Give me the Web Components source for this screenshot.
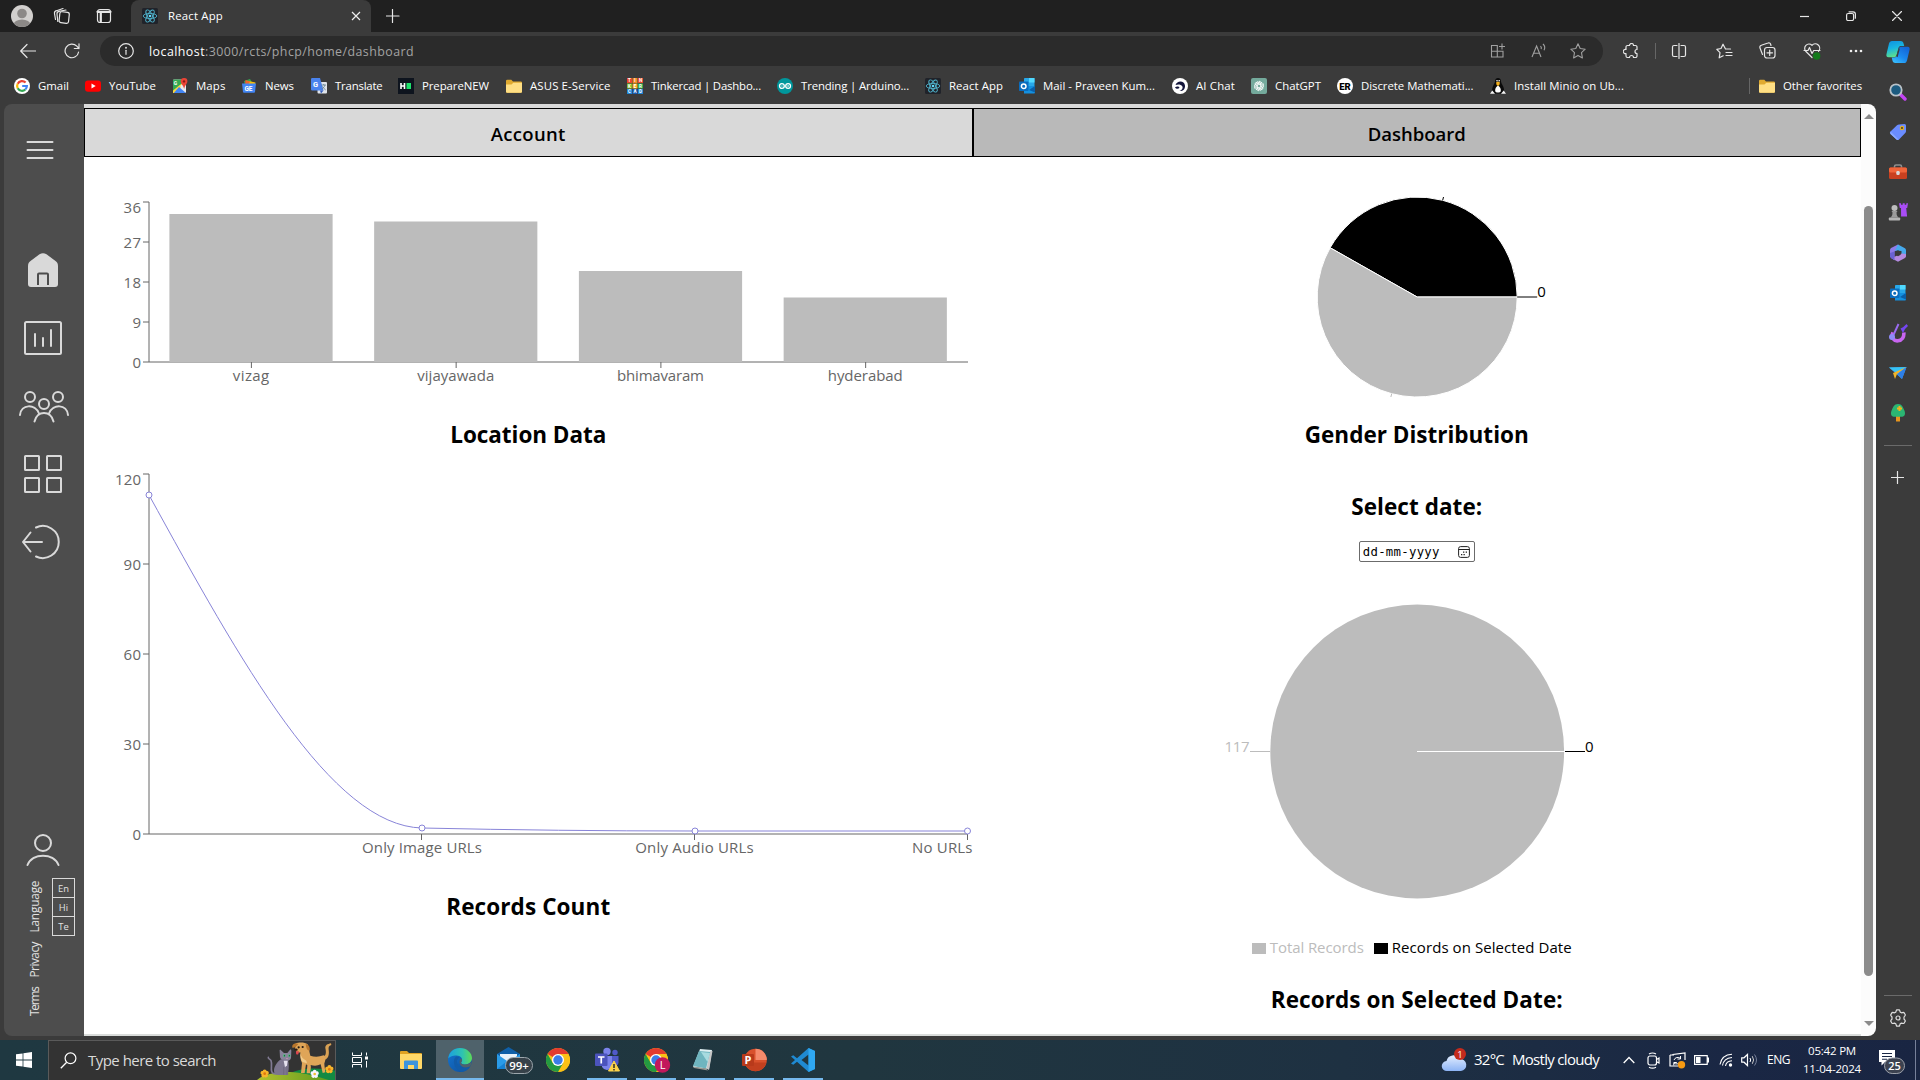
<!DOCTYPE html>
<html lang="en">
<head>
<meta charset="utf-8">
<title>React App</title>
<style>
html,body{margin:0;padding:0;width:1920px;height:1080px;overflow:hidden;background:#3b3b3b;font-family:"Open Sans","Noto Sans",sans-serif}
</style>
</head>
<body>
<desktop-screen></desktop-screen>
<script>
/* ---------- base ---------- */
const RESET = `*{box-sizing:border-box}svg{display:block;flex:none}`;
function define(name, css, html) {
  customElements.define(name, class extends HTMLElement {
    constructor() {
      super();
      const r = this.attachShadow({ mode: 'open' });
      const t = document.createElement('template');
      t.innerHTML = `<style>${RESET}${css}</style>${typeof html === 'function' ? html() : html}`;
      r.appendChild(t.content.cloneNode(true));
    }
  });
}
/* label whose tracking is set so that it fills a given width */
customElements.define('fit-text', class extends HTMLElement {
  constructor() {
    super();
    this.attachShadow({ mode: 'open' }).innerHTML =
      `<style>:host{display:inline-block;white-space:nowrap;flex:none}span{display:inline-block;white-space:pre}</style><span><slot></slot></span>`;
  }
  connectedCallback() { this.fit(); }
  fit() {
    const w = +this.getAttribute('w'), s = this.shadowRoot.querySelector('span');
    this.style.width = w + 'px';
    s.style.letterSpacing = '0';
    const n = s.getBoundingClientRect().width;
    if (n) s.style.letterSpacing = ((w - n) / this.textContent.length).toFixed(3) + 'px';
  }
});
/* lays items [x, width, markup] in a flex row, turning their starts into gaps */
function row(items, start) {
  let at = start;
  return items.map(([x, w, m]) => {
    const gap = x - at; at = x + w;
    return `<span class="c" style="width:${w}px;margin-left:${gap}px">${m}</span>`;
  }).join('');
}
const CELL = `.c{display:flex;align-items:center;justify-content:center;flex:none;height:100%}`;
const T = (w, s) => `<fit-text w="${w}">${s}</fit-text>`;
const S = (w, h, body, extra = '') => `<svg width="${w}" height="${h}" viewBox="0 0 ${w} ${h}" fill="none" ${extra}>${body}</svg>`;
const L = (w, body) => S(w, w, body, 'stroke="#e6e6e6" stroke-width="1.2" stroke-linecap="round" stroke-linejoin="round"');

/* ---------- icons ---------- */
const ic = {
  react: S(16,16,`<rect width="16" height="16" rx="1.5" fill="#20232a"/><g stroke="#4fb3cc" stroke-width=".9"><ellipse cx="8" cy="8" rx="6.8" ry="2.6"/><ellipse cx="8" cy="8" rx="6.8" ry="2.6" transform="rotate(60 8 8)"/><ellipse cx="8" cy="8" rx="6.8" ry="2.6" transform="rotate(120 8 8)"/></g><circle cx="8" cy="8" r="1.3" fill="#61dafb"/>`),
  google: S(16,16,`<circle cx="8" cy="8" r="8" fill="#fff"/><g stroke-width="2.2"><path d="M11.6 4.6A4.9 4.9 0 0 0 3.7 5.7" stroke="#ea4335"/><path d="M3.7 5.7a4.9 4.9 0 0 0 0 4.6" stroke="#fbbc05"/><path d="M3.7 10.3a4.9 4.9 0 0 0 7.6 1.2" stroke="#34a853"/><path d="M11.3 11.5A4.9 4.9 0 0 0 12.9 8H8.2" stroke="#4285f4"/></g>`),
  youtube: S(16,16,`<rect y="2.4" width="16" height="11.4" rx="3" fill="#f00"/><path d="M6.500 5.600v5l4.200-2.500z" fill="#fff"/>`),
  maps: S(16,16,`<rect x="1" y="1.500" width="13" height="13.500" rx="1" fill="#e8eaed"/><path d="M1 15 13.500 2.200 9 1.500H2a1 1 0 0 0-1 1z" fill="#34a853"/><path d="M1 12.500V15h2l11-11V2z" fill="#fbd63e"/><path d="m7 9 7 6H1.800z" fill="#4285f4"/><path d="m8 8 6 5.500V3z" fill="#e8eaed"/><text x="1.800" y="6.500" font-size="5" font-weight="700" fill="#fff" font-family="Roboto">G</text><path d="M12 0a3.300 3.300 0 0 1 3.400 3.400c0 2.200-2.600 3.600-3.200 7.600-.8-4-3.500-5.400-3.500-7.600A3.300 3.300 0 0 1 12 0z" fill="#ea4335"/><circle cx="12" cy="3.400" r="1.200" fill="#8c1a11"/>`),
  news: S(16,16,`<path d="m3 3 6-2 3 5-8 3z" fill="#34a853"/><path d="m5 2.500 9.500 2-1.500 6H4z" fill="#fbbc05"/><path d="m4 2 5 1.200-1 2.500-4 1z" fill="#ea4335" opacity=".7"/><path d="M1 5.500h14l-1 8.500a1 1 0 0 1-1 .8H3a1 1 0 0 1-1-.8z" fill="#4285f4"/><text x="3.400" y="12.600" font-size="6.500" font-weight="700" fill="#fff" font-family="Roboto">GE</text>`),
  translate: S(16,16,`<rect x="6.500" y="4" width="9.500" height="11.500" rx="1" fill="#dfe3ea"/><path d="M1.200 0H9l3.500 12.500H1.200A1.200 1.200 0 0 1 0 11.300V1.200A1.200 1.200 0 0 1 1.200 0z" fill="#4a83ee"/><text x="2" y="9" font-size="7.500" font-weight="700" fill="#fff" font-family="Roboto">G</text><path d="m9 12.500 3.500 0-2.500 3z" fill="#3159b8"/><path d="M10.500 7h4.500M12.700 6v1M14 7c-.5 2-2 3.400-3.300 4M11.500 8.500c.8 1.500 2 2.500 3.200 3.500" stroke="#607d8b" stroke-width=".8"/>`),
  hr: S(16,16,`<rect width="16" height="16" fill="#0e141e"/><path d="M3 5v6M6.500 5v6M3 8h4" stroke="#fff" stroke-width="1.600"/><rect x="8.500" y="5" width="4.500" height="6" fill="#1ee26b"/>`),
  folder: S(16,16,`<path d="M0 3a1.300 1.300 0 0 1 1.300-1.300h4L7 3.500h7.700A1.300 1.300 0 0 1 16 4.800v8.700a1.200 1.200 0 0 1-1.200 1.200H1.200A1.200 1.200 0 0 1 0 13.500z" fill="#e0aa30"/><path d="M0 6.500h5.500L7.300 4.800h8.700v8.700a1.200 1.200 0 0 1-1.200 1.200H1.200A1.200 1.200 0 0 1 0 13.500z" fill="#ffdf84"/>`),
  tinkercad: S(16,16,`<g><rect width="5" height="5" fill="#e9452c"/><rect x="5.500" width="5" height="5" fill="#f28a23"/><rect x="11" width="5" height="5" fill="#e9452c"/><rect y="5.500" width="5" height="5" fill="#83bb26"/><rect x="5.500" y="5.500" width="5" height="5" fill="#f9b31c"/><rect x="11" y="5.500" width="5" height="5" fill="#2fae4d"/><rect y="11" width="5" height="5" fill="#1f86d6"/><rect x="5.500" y="11" width="5" height="5" fill="#1a5fb4"/><rect x="11" y="11" width="5" height="5" fill="#1f86d6"/></g><g font-size="4.600" font-weight="700" fill="#fff" font-family="Roboto" text-anchor="middle"><text x="2.500" y="4.200">T</text><text x="8" y="4.200">I</text><text x="13.500" y="4.200">N</text><text x="2.500" y="9.700">K</text><text x="8" y="9.700">E</text><text x="13.500" y="9.700">R</text><text x="2.500" y="15.200">C</text><text x="8" y="15.200">A</text><text x="13.500" y="15.200">D</text></g>`),
  arduino: S(16,16,`<circle cx="8" cy="8" r="8" fill="#00979c"/><g stroke="#fff" stroke-width="1.300"><circle cx="4.900" cy="8" r="2.400"/><circle cx="11.100" cy="8" r="2.400"/></g><path d="M4 8h1.800M10.200 8H12M11.100 7.100v1.800" stroke="#fff" stroke-width=".6"/>`),
  outlook: S(16,16,`<rect x="5" width="10.500" height="9" rx=".8" fill="#28a8ea"/><rect x="10" y="0" width="5.500" height="4.500" fill="#50d9ff"/><path d="M5 8h11v6.500a1 1 0 0 1-1 1H5z" fill="#1490df"/><path d="m10 12 6-4v6.500z" fill="#0a5fa8"/><rect y="3.500" width="9.500" height="9.500" rx=".8" fill="#0a6cbd"/><circle cx="4.700" cy="8.200" r="2.300" stroke="#fff" stroke-width="1.500"/>`),
  aichat: S(16,16,`<circle cx="8" cy="8" r="8" fill="#fff"/><path d="M3.500 7C5 2.200 12.500 2.200 13 7.700c.2 3.600-2.500 5.800-5.500 5.300 2.500-.8 3.800-3 2.800-4.800C9 6.200 6 6 3.500 7z" fill="#12143a"/><path d="M3 9.200c2-1.200 4-.8 4.500.5-1 1.500-3.500 1.500-4.500-.5z" fill="#12143a"/>`),
  gpt: S(16,16,`<rect width="16" height="16" rx="2" fill="#74aa9c"/><g stroke="#fff" stroke-width=".9">${[0,60,120,180,240,300].map(a => `<path d="M8 3.100 11 4.800v3.600L8 10" transform="rotate(${a} 8 8)"/>`).join('')}</g>`),
  er: S(16,16,`<circle cx="8" cy="8" r="8" fill="#fff"/><text x="8" y="11.500" font-size="9.500" font-weight="900" fill="#000" font-family="Roboto" text-anchor="middle">ER</text>`),
  tux: S(16,16,`<path d="M8 0c2 0 3 1.500 3 3.500 0 2 2.500 4 3 7.500.2 2-.5 4-1.500 4.500h-9C2.500 15 2 13 2.200 11 2.500 7.500 5 5.500 5 3.500 5 1.500 6 0 8 0z" fill="#0b0b0b"/><path d="M8 7.500c2.300 1.500 3 3.500 2.800 5.500-.2 2-5.400 2-5.600 0C5 11 5.700 9 8 7.500z" fill="#fff"/><path d="m6 4.500 2-1 2 1-.6 2.400L8 8.100 6.600 6.900z" fill="#f2b01e"/><circle cx="7" cy="2.700" r=".8" fill="#fff"/><circle cx="9.200" cy="2.700" r=".8" fill="#fff"/><path d="M0 15.800 2.300 12.500l2.700 3.300zM16 15.800l-2.300-3.300-2.700 3.300z" fill="#f5f5f5"/>`),
  copilot: S(24,24,`<defs><linearGradient id="a" x1="0" y1="0" x2=".3" y2="1"><stop stop-color="#0f8fe0"/><stop offset=".5" stop-color="#18b5e0"/><stop offset="1" stop-color="#5fe08a"/></linearGradient><linearGradient id="b" x1=".7" y1="0" x2="0" y2="1"><stop stop-color="#1467d8"/><stop offset=".5" stop-color="#1b8af0"/><stop offset="1" stop-color="#3ec8ff"/></linearGradient></defs><path d="M6 1h8.500c2 0 2.800 1.200 3.200 3l.5 2H15c-1.500 0-2.200.8-2.600 2.200L10.600 15c-.5 1.600-1.200 2.300-2.800 2.300H2.500C.6 17.300 0 15.800.5 14L3 3.600C3.400 2 4.500 1 6 1z" fill="url(#a)"/><path d="M18 23H9.500c-2 0-2.800-1.200-3.200-3l-.6-2.600h2.500c1.500 0 2.200-.7 2.700-2.200L12.700 9c.5-1.600 1.200-2.300 2.800-2.300h6c1.900 0 2.500 1.500 2 3.300L21 20.400c-.4 1.600-1.500 2.600-3 2.600z" fill="url(#b)"/><path d="M10.300 16.300 12.700 8.500h1.200l-2.300 8.800z" fill="#3b3b3b"/>`),
  chrome: S(24,24,`<circle cx="12" cy="12" r="12" fill="#fbc116"/><path d="M12 12 1.600 6A12 12 0 0 1 22.400 6z" fill="#e33b2e"/><path d="M12 6h10.400a12 12 0 0 1-10.400 18l5.200-9z" fill="#fbc116"/><path d="M1.600 6A12 12 0 0 0 12 24l5.200-9-10.400 0z" fill="#249a41"/><circle cx="12" cy="12" r="6" fill="#fff"/><circle cx="12" cy="12" r="4.700" fill="#3b7de8"/>`)
};

/* ---------- title bar ---------- */
define('title-bar', `:host{display:flex;height:32px;background:#202020;color:#fff;font-size:11.400px}${CELL}
.tab{display:flex;align-items:center;width:240px;height:32px;background:#3b3b3b;border-radius:8px 8px 0 0;padding-left:11px;flex:none}
.tab fit-text{margin:-1px 0 0 10px}.x{margin-left:128px}.r{display:flex;margin-left:auto}`,
`${row([
 [11,22,S(22,24,`<circle cx="11" cy="12" r="11" fill="#d2d0ce"/><clipPath id="k"><circle cx="11" cy="12" r="11"/></clipPath><g clip-path="url(#k)" fill="#8c8987"><circle cx="11" cy="9.500" r="4.800"/><ellipse cx="11" cy="21" rx="8.500" ry="5.500"/></g>`)],
 [53,18,L(18,`<rect x="6.500" y="5" width="9.500" height="11" rx="2"  transform="rotate(6 11 10)"/><path d="M4.800 14.500 4 7a2.500 2.500 0 0 1 2-2.700L13 3M2.500 12.500 1.500 6.500a2.500 2.500 0 0 1 2-2.800L10 1.500"/>`)],
 [96,16,L(16,`<rect x="1.500" y="1.500" width="13" height="13" rx="2.500"/><path d="M1.500 3.800h13M4.800 5v9" stroke-width="2.200"/>`)]
],0)}
<div class="tab" style="margin-left:19px">${ic.react}${T(55,'React App')}<svg class="x" width="10" height="10" viewBox="0 0 10 10" stroke="#eee" stroke-width="1.200"><path d="m1 1 8 8M9 1 1 9"/></svg></div>
${row([[386,14,L(14,`<path d="M6.500.5v13M0 7h13"/>`)]],371)}
<div class="r">${row([[1800,10,L(10,`<path d="M0 5.500h9" stroke-linecap="butt"/>`)],[1846,10,L(10,`<rect x=".6" y="2.500" width="7" height="7" rx="1.500"/><path d="M3 .8h4a2.400 2.400 0 0 1 2.400 2.400v4"/>`)],[1892,10,L(10,`<path d="m.5.5 9 9M9.500.5l-9 9"/>`)]],1800)}<span style="width:18px"></span></div>`);

/* ---------- tool bar ---------- */
define('tool-bar', `:host{display:flex;height:38px;padding-top:4px;align-items:flex-start;color:#fff;font-size:12.400px}${CELL}.c{height:30px}
.pill{display:flex;align-items:center;height:30px;width:1503px;margin-left:20px;border-radius:15px;background:#2b2b2b;flex:none}.pill .g{color:#a3a3a3}`,
`${row([
 [20,16,L(16,`<path d="M15.500 8H1M7 1.500.700 8 7 14.500"/>`)],
 [64,16,L(16,`<path d="M14.600 9A6.800 6.800 0 1 1 12.800 3.200L15 5.500M15 .8v4.700h-4.700"/>`)]
],0)}
<div class="pill">${row([
 [118,16,L(16,`<circle cx="8" cy="8" r="7.300"/><path d="M8 7.300v4"/><circle cx="8" cy="4.700" r=".4"/>`)],
 [149,56,T(56,'localhost')],[205,209,`<span class="g">${T(209,':3000/rcts/phcp/home/dashboard')}</span>`],
 [1490,16,S(16,16,`<path d="M1.500 2.500h5.800v5.700H1.500zM1.500 8.200h5.800v5.800H1.500zM7.300 8.200H13V14H7.300zM12 .5v6M9 3.500h6" stroke="#a0a0a0" stroke-width="1.100"/>`)],
 [1531,16,S(16,16,`<path d="m1 14 4.600-11L10 14M2.600 10.200h6.200M9.500 3.200c.9.900 1 2 .7 3M12 1c1.700 1.600 2 4.400 1 6.200" stroke="#a0a0a0" stroke-width="1.100"/>`)],
 [1570,16,S(16,16,`<path d="m8 .8 2.200 4.700 5 .7-3.700 3.500.9 5.200L8 12.400l-4.400 2.500.9-5.200L.8 6.200l5-.7z" stroke="#a0a0a0" stroke-width="1.100" stroke-linejoin="round"/>`)]
],100)}</div>
${row([
 [1623,16,L(16,`<path d="M3 5.500V4a1.500 1.500 0 0 1 1.500-1.500h2a2 2 0 0 1 4 0h2A1.500 1.500 0 0 1 14 4v2.500a2 2 0 0 0 0 4V13a1.500 1.500 0 0 1-1.500 1.500h-2a2 2 0 0 0-4 0h-2A1.500 1.500 0 0 1 3 13v-2.500a2.100 2.100 0 1 1 0-4z"/>`)],
 [1655,1,S(1,16,`<rect width="1" height="16" fill="#666"/>`)],
 [1671,16,L(16,`<path d="M6 2.500H3A1.500 1.500 0 0 0 1.500 4v8A1.500 1.500 0 0 0 3 13.500h3M10 2.500h3A1.500 1.500 0 0 1 14.500 4v8a1.500 1.500 0 0 1-1.500 1.500h-3M8 .5v15"/>`)],
 [1716,17,L(17,`<path d="M14.500 6h-5L7 1.200 5 5.500.8 6.300l3.200 3.300-.8 5.200 4-2M10 9.500h6M10 12.500h6"/>`)],
 [1758,18,L(18,`<rect x="6.500" y="5.500" width="10.500" height="10.500" rx="2.500"/><path d="M11.700 8v5.500M9 10.800h5.500M4.500 12.500 2 6a2 2 0 0 1 1.300-2.700L10 1a2 2 0 0 1 2.600 1.200l.4 1.300"/>`)],
 [1803,18,L(18,`<path d="M9 15.500 3 9.500A4.300 4.300 0 0 1 9 3.300a4.300 4.300 0 0 1 6.500 6M1 8.500h4l1.500-3 2.500 6 1.700-3H17"/><circle cx="13.700" cy="14" r="3.700" fill="#137a1b" stroke="none"/>`)],
 [1849,14,S(14,4,`<g fill="#eee"><circle cx="2" cy="2" r="1.300"/><circle cx="7" cy="2" r="1.300"/><circle cx="12" cy="2" r="1.300"/></g>`)]
],1603)}`);

/* ---------- favourites ---------- */
const favs = [[14,'google',31,'Gmail'],[85,'youtube',47,'YouTube'],[172,'maps',29.500,'Maps'],[241,'news',29,'News'],[311,'translate',47.500,'Translate'],[398,'hr',67,'PrepareNEW'],[506,'folder',80.500,'ASUS E-Service'],[627,'tinkercad',110,'Tinkercad | Dashbo...'],[777,'arduino',108,'Trending | Arduino...'],[925,'react',54,'React App'],[1019,'outlook',112,'Mail - Praveen Kum...'],[1172,'aichat',39,'AI Chat'],[1251,'gpt',46,'ChatGPT'],[1337,'er',112.500,'Discrete Mathemati...'],[1490,'tux',110,'Install Minio on Ub...']];
define('favorites-bar', `:host{display:flex;height:32px;align-items:center;color:#fff;font-size:11.400px}${CELL}.c fit-text{margin:-1px 0 0 8px}
.sep{width:1px;height:16px;background:#666;margin-left:125px;margin-right:9px}`,
`${row(favs.map(([x,i,w,t]) => [x, w + 24, ic[i] + T(w, t)]), 0)}<span class="sep"></span><span class="c">${ic.folder}${T(79,'Other favorites')}</span>`);

/* ---------- app side bar ---------- */
define('app-nav', `:host{display:flex;flex-direction:column;width:80px;height:932px;background:#4d4d4d;flex:none}a{display:block;padding-left:14px}
.foot{display:flex;padding:0 9px 17px 18px;gap:4px}
.lang{display:flex;flex-direction:column;width:23px;border:1px solid #d9d9d9;height:58px;color:#e2e2e2;font-size:9.400px}
.lang b{font-weight:400;flex:1;display:flex;align-items:center;justify-content:center}.lang b+b{border-top:1px solid #d9d9d9}
.gap{flex:1}`, () => {
 const g = (h, y, body) => `<a><svg width="54" height="${h}" viewBox="18 ${y} 54 ${h}" fill="none" stroke="#d9d9d9" stroke-width="2" stroke-linecap="round" stroke-linejoin="round">${body}</svg></a>`;
 return g(149,104,`<path d="M27.500 142h25M27.500 150h25M27.500 158h25"/>`)
 + g(64,253,`<path d="M39.500 254.300c2.300-1.500 4.700-1.500 7 0l9 6.700c1.700 1.300 2.500 2.600 2.500 5v18c0 2-1 3-3 3H31c-2 0-3-1-3-3v-18c0-2.400.8-3.700 2.500-5z" fill="#d9d9d9" stroke="none"/><path d="M38 285v-10.500c0-.6.4-1 1-1h8c.6 0 1 .4 1 1V285" stroke="#4d4d4d" stroke-linecap="butt"/>`)
 + g(70,317,`<rect x="25" y="322" width="36" height="32" rx="1.500"/><path d="M35 334v12M43 338v8M51 330v16"/>`)
 + g(65,387,`<circle cx="30" cy="397" r="5"/><circle cx="58" cy="397" r="5"/><circle cx="44" cy="404" r="5"/><path d="M20 415c1-11 15-11.500 19-1.500M68 415c-1-11-15-11.500-19-1.500M34.500 421.500c2.500-11.500 16.500-11.500 19 0"/>`)
 + g(70,452,`<rect x="25" y="456" width="14" height="14" rx=".5"/><rect x="47" y="456" width="14" height="14" rx=".5"/><rect x="25" y="478" width="14" height="14" rx=".5"/><rect x="47" y="478" width="14" height="14" rx=".5"/>`)
 + g(50,522,`<path d="M36 527.500A16 16 0 1 1 36 556.500M42 542H23M30.500 532.500 23 542l7.500 9.500"/>`)
 + `<span class="gap"></span>` + g(45,833,`<circle cx="43" cy="843" r="8"/><path d="M27.500 865c5-12.500 26-12.500 31 0"/>`)
 + `<div class="foot"><svg width="26" height="141" viewBox="22 878 26 141" fill="#e2e2e2" font-size="11.800"><text transform="translate(39 932.500) rotate(-90)" textLength="52">Language</text><text transform="translate(39 977.500) rotate(-90)" textLength="36">Privacy</text><text transform="translate(39 1016) rotate(-90)" textLength="30">Terms</text></svg>
 <div class="lang"><b>En</b><b>Hi</b><b>Te</b></div></div>`;
});

/* ---------- charts ---------- */
const AX = 'stroke="#666" stroke-width="1"';
function frame(top, bottom, ticks) {
  return `<g ${AX} fill="none"><path d="M149 ${top}V${bottom}M149 ${bottom}H968"/>` + ticks.map((_, i) => `<path d="M143 ${bottom - i * (bottom - top) / 4}h6"/>`).join('') + `</g>`
   + ticks.map((t, i) => `<text x="141" y="${bottom - i * (bottom - top) / 4 + 5.500 + (i === 4 ? 5 : 0)}" text-anchor="end" textLength="${String(t).length * 8.700}">${t}</text>`).join('');
}
define('bar-chart', `:host{display:block;height:262px}svg{font-size:15px;fill:#666}`, () => {
  const names = ['vizag','vijayawada','bhimavaram','hyderabad'], tops = [214,221.500,271,297.500], w = [36.500,77,87,75];
  return `<svg width="888" height="262" viewBox="84 157 888 262">${frame(202, 362, [0,9,18,27,36])}`
   + names.map((n, i) => { const x = 149 + 204.750 * i; return `<rect x="${x + 20.400}" y="${tops[i]}" width="163.200" height="${362 - tops[i]}" fill="#bcbcbc"/><path d="M${x + 102.400} 362v6" ${AX}/><text x="${x + 102}" y="381" text-anchor="middle" textLength="${w[i]}">${n}</text>`; }).join('') + `</svg>`;
});
define('line-chart', `:host{display:block;height:440px}svg{font-size:15px;fill:#666}`, () =>
  `<svg width="889" height="439" viewBox="84 451 889 439">${frame(474, 834, [0,30,60,90,120])}<path d="M421.500 834v6M694.500 834v6M967.500 834v6" ${AX}/>
  <path d="M149 495C240 660.500 331 826 422 828C513 830 604 831 695 831H968" fill="none" stroke="#8884d8"/>
  <g fill="#fff" stroke="#8884d8"><circle cx="149" cy="495" r="3"/><circle cx="422" cy="828" r="3"/><circle cx="695" cy="831" r="3"/><circle cx="967.500" cy="831" r="3"/></g>
  <text x="422" y="853" text-anchor="middle" textLength="120">Only Image URLs</text><text x="694.500" y="853" text-anchor="middle" textLength="118.500">Only Audio URLs</text><text x="912" y="853" textLength="60.500">No URLs</text></svg>`);
define('gender-pie', `:host{display:block;height:200px}svg{font-size:15px}`, () => {
  const cx = 1417.200, cy = 297, a = 150.500 * Math.PI / 180, px = cx + 100 * Math.cos(a), py = cy - 100 * Math.sin(a);
  const ray = (d, c) => { const t = d * Math.PI / 180; return `<path d="M${cx + 100 * Math.cos(t)} ${cy - 100 * Math.sin(t)}L${cx + 120 * Math.cos(t)} ${cy - 120 * Math.sin(t)}" stroke="${c}"/>`; };
  return `<svg width="888" height="200" viewBox="973 197 888 200"><g stroke="#fff"><path d="M${cx} ${cy}H${cx + 100}A100 100 0 0 0 ${px} ${py}Z" fill="#000"/><path d="M${cx} ${cy}L${px} ${py}A100 100 0 1 0 ${cx + 100} ${cy}Z" fill="#bcbcbc"/></g>${ray(75.250,'#000')}${ray(255.250,'#bcbcbc')}${ray(0,'#000')}<text x="1537.200" y="297" textLength="9">0</text></svg>`;
});
define('records-pie', `:host{display:block;height:366px}svg{font-size:15px}`,
 `<svg width="888" height="366" viewBox="973 562 888 366"><circle cx="1417.200" cy="751.500" r="146.900" fill="#bcbcbc"/><path d="M1417 751.500h147.500" stroke="#fff"/><path d="M1565 751.500h20" stroke="#000"/><path d="M1250 751.500h20" stroke="#bcbcbc"/><text x="1224.500" y="751.500" fill="#bcbcbc" textLength="25">117</text><text x="1585" y="751.500" textLength="9">0</text></svg>`);
define('date-field', `:host{display:flex;align-items:center;width:116px;height:21px;border:1px solid #6b6b6b;border-radius:2px;background:#fff;padding:0 4px 0 3px;font:12.300px "DejaVu Sans Mono",monospace;justify-content:space-between}`,
 `${T(77,'dd-mm-yyyy')}${S(12,12,`<rect x=".6" y=".6" width="10.800" height="10.800" rx="2" stroke="#222"/><path d="M.6 3.500h10.800" stroke="#222"/><path d="M5 6.200h1.300M7.700 6.200H9M3 8.700h1.300M5.500 8.700h1.300" stroke="#222" stroke-width="1.200"/>`)}`);
define('chart-legend', `:host{display:flex;height:24px;align-items:center;font-size:15px;color:#000}i{width:14px;height:11px;background:#000;margin:3px 4px 0 0}.g{color:#bcbcbc}.g+i{margin-left:10px}`,
 `<i style="background:#bcbcbc"></i><span class="g">${T(94,'Total Records')}</span><i></i>${T(180,'Records on Selected Date')}`);

define('dash-board', `:host{display:flex;flex-direction:column;flex:1;height:932px;background:#fff;border-top:4px solid #d9d9d9;border-bottom:2px solid #d9dcda;overflow:hidden;color:#000}
.tabs{display:flex;height:49px}.tabs div{flex:1;border:1px solid #000;display:flex;align-items:center;justify-content:center;background:#d9d9d9;font-weight:600;font-size:18.500px;padding-top:2px}.tabs div:last-child{background:#b9b9b9}
.cols{display:flex}.col{width:888.500px;display:flex;flex-direction:column;align-items:center}
.col>bar-chart,.col>line-chart{align-self:flex-start}
h2{margin:0;height:32px;line-height:32px;font-size:22.500px;font-weight:700}`,
`<div class="tabs"><div>${T(75,'Account')}</div><div>${T(98,'Dashboard')}</div></div>
<div class="cols"><div class="col"><bar-chart></bar-chart><h2>${T(156,'Location Data')}</h2><line-chart></line-chart><h2>${T(164,'Records Count')}</h2></div>
<div class="col" style="padding-top:40px"><gender-pie></gender-pie><h2 style="margin-top:22px">${T(224,'Gender Distribution')}</h2><h2 style="margin:40px 0 18px">${T(131,'Select date:')}</h2><date-field></date-field><records-pie></records-pie><chart-legend style="margin:7px 10px 0 0"></chart-legend><h2 style="margin-top:25px">${T(292,'Records on Selected Date:')}</h2></div></div>`);

define('scroll-track', `:host{display:flex;flex-direction:column;align-items:center;width:15px;height:932px;background:#fcfcfc;padding:10px 0;flex:none}i{width:9px;height:770px;border-radius:5px;background:#8b8b8b;margin-top:87px;margin-bottom:auto}`,
 `${S(10,5,'<path d="M0 5 5 0l5 5z" fill="#8b8b8b"/>')}<i></i>${S(10,5,'<path d="M0 0h10L5 5z" fill="#8b8b8b"/>')}`);

/* ---------- browser side bar ---------- */
define('edge-rail', `:host{display:flex;flex-direction:column;align-items:center;width:44px;padding-right:1px;flex:none}span{display:flex;height:40.100px;align-items:center;justify-content:center;flex:none}hr{width:28px;height:1px;border:0;background:#6a6a6a;margin:0;flex:none}`, () => {
 const c = m => `<span>${m}</span>`;
 return c(ic.copilot)
 + c(S(18,18,`<path d="m11 11 5 5" stroke="#c445f5" stroke-width="3.400" stroke-linecap="round"/><circle cx="7" cy="7" r="5.700" fill="#1c5b80" stroke="#b9c2c8" stroke-width="1.800"/>`))
 + c(S(18,18,`<path d="M10 1.500 15.500 1A1.500 1.500 0 0 1 17 2.500L17 8c0 1-.3 1.500-1 2.200L10 16.500c-.8.8-1.700.8-2.500 0L1.500 11c-.8-.8-.8-1.700 0-2.500L8 2.200c.6-.5 1.200-.7 2-.7z" fill="#6a8cff"/><path d="m1.500 8.500 8 8c-.8.500-1.500.500-2 0L1.500 11z" fill="#8aa9ff"/><circle cx="13" cy="5" r="1.600" fill="#333" stroke="#e8b11a" stroke-width="1.300"/>`))
 + c(S(20,18,`<path d="M6.500 5V3.500A1.500 1.500 0 0 1 8 2h4a1.500 1.500 0 0 1 1.500 1.500V5" stroke="#8f8f8f" stroke-width="1.600"/><rect x="1" y="4.500" width="18" height="11.500" rx="1.500" fill="#c9401f"/><rect x="1" y="4.500" width="18" height="5" rx="1.500" fill="#f0653a"/><rect x="8.300" y="8" width="3.400" height="4" rx="1.200" fill="#d9d9d9"/>`))
 + c(S(20,20,`<path d="M11 1.200h2v1.500h1.700V1.200h2v1.500h1.600V1.200H20L19.200 6h-1l.9 8.500h-6L13 6h-1.200z" fill="#a94df5"/><circle cx="6.500" cy="6" r="3" fill="#bdbdbd"/><path d="M3.500 9h6l-1 1.500c0 3 1 4 2 5h-8c1-1 2-2 2-5z" fill="#9c9c9c"/><rect x=".8" y="15.500" width="11.400" height="3" rx="1" fill="#b5b5b5"/>`))
 + c(S(18,18,`<path d="M9 .5 3 3.500C1.500 4.300 1 5 1 6.500v5c0 1.300.5 2 1.500 2.700l3 2V7.500L12 4z" fill="#8f7be8"/><path d="M9 .5 15.500 4C16.600 4.700 17 5.300 17 6.500V12l-4.500-2.500V7L6 6.500z" fill="#45a9ec"/><path d="M17 10v2c0 1-.5 1.700-1.500 2.300L9 17.700l-6.500-3.500L6 12.500l6.500-3z" fill="#b58be0"/><path d="M5.500 7.500v8.700L2.500 14.200C1.500 13.500 1 12.800 1 11.500V9z" fill="#6a62d2"/><path d="M6.500 7.500 9 6.200l2.700 1.500v3L9 12.200l-2.500-1.500z" fill="#3b3b3b"/>`))
 + c(ic.outlook)
 + c(S(20,20,`<path d="M5 9.500c-2.500 5 1 8.800 5 8.300 4-.4 6.300-3.600 5.800-8.300" stroke="#c865f0" stroke-width="3.600"/><path d="M10.500 1 5 13" stroke="#9a6cf0" stroke-width="1.900"/><circle cx="4" cy="14" r="3" fill="#8f8bf8"/><path d="m12.500 5.500 2.500-1.300L18.500 1l1.500 2-3 3-2 4z" fill="#7446f2"/>`))
 + c(S(18,14,`<path d="m0 1.500 17.500-.5L13 13 8 8.500z" fill="#3f9af0"/><path d="m0 1.500 17.500-.5L7 6.500z" fill="#35c3f5"/><path d="M17.500 1 8 8l-2 5-2-6z" fill="#f0b429"/><path d="M17.500 1 8.500 8 13 13z" fill="#2d7fe8"/>`))
 + c(S(18,20,`<rect x="7" y="12" width="4" height="6.500" rx=".6" fill="#e8961e"/><path d="M9 1c4 0 5 3.500 6.200 6 1.600 3.300.8 6.700-2 6.700H4.800c-2.800 0-3.600-3.400-2-6.700C4 4.500 5 1 9 1z" fill="#2bb673"/><path d="M10.500 3v5M8 5.500h5" stroke="#f2b31e" stroke-width="2"/>`))
 + `<hr style="margin:12px 0 25px"><span style="height:14px">${L(13,`<path d="M6.500.5v12M.5 6.500h12"/>`)}</span><span style="flex:1;height:auto"></span><hr><span style="height:44px">${S(18,18,`<path d="m7.300 1.500.4-.7h2.600l.4.700.5 1.600 1.300.7 1.700-.4.800.2 1.300 2.200-.2.800L15 8v2l1.100 1.300.2.800-1.300 2.200-.8.200-1.700-.4-1.300.7-.5 1.600-.4.700H7.700l-.4-.7-.5-1.600-1.300-.7-1.700.4-.8-.2-1.300-2.200.2-.8L3 10V8L1.900 6.700l-.2-.8L3 3.600l.8-.2 1.700.4 1.300-.7z" stroke="#ddd" stroke-width="1.200" stroke-linejoin="round"/><circle cx="9" cy="9" r="2" stroke="#ddd" stroke-width="1.200"/>`)}</span>`;
});

/* ---------- task bar ---------- */
define('task-bar', `:host{display:flex;height:40px;background:linear-gradient(90deg,#1f3841 0,#20363f 45%,#1e3142 70%,#1a2744 90%,#192542);color:#fff;font-size:15px}${CELL}
.search{display:flex;width:288px;height:40px;background:#333;border:1px solid #5a5a5a;border-width:1px 1px 0 1px;padding-left:11px;align-items:center;flex:none;color:#dadada;overflow:hidden}
.search fit-text{margin:-1px 0 0 11px}.search .pets{margin-left:41px;align-self:flex-end}
.run{border-bottom:2px solid #76b9ed;padding-top:2px}.box{width:100%;height:100%;display:flex;align-items:center;justify-content:center}.on{background:#4f626b}.up{margin-top:-2px}
.clock{display:flex;flex-direction:column;align-items:center;gap:2px;font-size:11.500px;line-height:16px;margin-top:-1px}`, () => {
 const run = (m, cls = '') => `<span class="box run ${cls}">${m}</span>`;
 const flower = (x, y, a, b) => `<g fill="${a}">${[0,72,144,216,288].map(d => `<circle cx="${x}" cy="${y - 7}" r="5.800" transform="rotate(${d} ${x} ${y})"/>`).join('')}</g><circle cx="${x}" cy="${y}" r="4" fill="${b}"/>`;
 const pets = `<svg class="pets" width="79" height="38" viewBox="20 18 237 114">
 <defs><linearGradient id="h" x1="0" x2="1"><stop stop-color="#b3c32f"/><stop offset="1" stop-color="#5f9a1e"/></linearGradient></defs>
 <path d="M120 112c40-22 100-14 137-8v28H120z" fill="#128a43"/><path d="M20 132c30-26 90-26 125-22 30 4 60 12 90 22z" fill="url(#h)"/>
 <path d="M76 114c-22-2-8-26-14-40-3-6-10-6-8-10" stroke="#807a92" stroke-width="5" stroke-linecap="round" fill="none"/>
 <path d="M88 45c-1-3 2-5 4-2l9 8h10l8-10c3-2 4 0 4 4l-1 22c-3 7-9 9-15 9-9 0-16-5-18-12z" fill="#8a849c"/>
 <path d="M92 70c-12 8-21 22-21 34 0 8 4 13 12 13h28c3 0 4-3 2-5 3-14 3-28 0-40z" fill="#7c768e"/><path d="M100 74h12l-2 14-6 6z" fill="#e6e2ee"/><path d="M100 92v24M110 92v24" stroke="#69637a" stroke-width="2"/>
 <ellipse cx="102" cy="59" rx="3.500" ry="4" fill="#43c47a"/><ellipse cx="117" cy="59" rx="3.500" ry="4" fill="#43c47a"/><circle cx="102.500" cy="59" r="1.600" fill="#111"/><circle cx="117" cy="59" r="1.600" fill="#111"/><path d="m107 66 6 0-3 4z" fill="#d99bb0"/>
 <path d="M219 62c10-4 8-16 6-26-1-8 6-12 17-14l1 5c-8 3-9 7-8 14 2 14 0 26-12 30z" fill="#d9a154"/>
 <path d="M136 22c10-4 28-4 36 3 4 12 5 22 8 34 12 4 26 4 40-1 7 4 6 16 2 24 0 9 2 16 3 27l-8 2-6-26c-10 5-20 5-30 2 2 8-1 16-2 25h-10l2-24-4-3-4 26h-11l3-30c-6-12-5-22-5-32-8 2-14-2-16-9z" fill="#dfa558"/>
 <path d="M150 52c2 10 8 18 18 22l2 8-14-4c-5-8-6-16-6-26z" fill="#f2cb8a"/><path d="M137 22c-9 1-13 7-11 13 6 2 12-3 18-11zM166 24c10 0 14 12 12 20-7 0-11-7-12-20z" fill="#b9762c"/>
 <circle cx="145" cy="34" r="3.300" fill="#241a12"/><circle cx="157" cy="33" r="3.300" fill="#241a12"/><ellipse cx="137" cy="41" rx="5" ry="3.600" fill="#2a1a14"/><path d="M137 46h9l-2 9c-4 2-7 0-7-4z" fill="#e0454f"/>
 ${flower(43,113,'#f7b52a','#e2760e')}${flower(237,100,'#f7b52a','#e2760e')}${flower(193,114,'#f6f4ff','#f0c030')}</svg>`;
 return `<span class="c" style="width:48px">${S(16,16,'<path d="m0 2.300 6.600-.9v6.200H0zM7.400 1.300 16 0v7.600H7.400zM0 8.400h6.600v6.200L0 13.700zM7.400 8.400H16V16l-8.600-1.200z" fill="#fff"/>')}</span>
 <div class="search">${S(17,17,'<circle cx="10.500" cy="6.300" r="5.400" stroke="#fff" stroke-width="1.200"/><path d="M6.700 10.300.8 16.200" stroke="#fff" stroke-width="1.300"/>')}${T(128,'Type here to search')}${pets}</div>`
 + row([
  [350,20,S(18,16,`<path d="M1.500.5v3h9v-3M1.500 15.500v-3h9v3M1.500 5.500h9v5h-9zM15.500.5v3M15.500 9v6.500" stroke="#fff"/><rect x="14" y="4.500" width="3" height="3" fill="#fff"/>`)],
  [399,23,S(22,20,`<path d="M0 2a1 1 0 0 1 1-1h6l2 2h12a1 1 0 0 1 1 1v3H0z" fill="#e0a222"/><path d="M0 4h22v14a1 1 0 0 1-1 1H1a1 1 0 0 1-1-1z" fill="#ffd868"/><path d="M4 11.500a1 1 0 0 1 1-1h12a1 1 0 0 1 1 1V19h-4v-4H8v4H4z" fill="#3d94dc"/>`)],
  [436,48,run(S(24,24,`<defs><linearGradient id="e1" x1="0" x2="1"><stop stop-color="#1ba0e0"/><stop offset=".6" stop-color="#2fc3b0"/><stop offset="1" stop-color="#5fdb55"/></linearGradient><linearGradient id="e2" x1="0" y1="0" x2="1" y2="1"><stop stop-color="#1576d0"/><stop offset="1" stop-color="#0c4d9c"/></linearGradient></defs><circle cx="12" cy="12" r="12" fill="url(#e2)"/><path d="M.2 10.500C1 4 6 0 12 0c7 0 12 5 12 10 0 4-3.500 6.500-7 6.500-3 0-4.500-1.300-3.500-2.700 2-3-1-6.300-5-6.300C4.500 7.500 1 9 .2 10.500z" fill="url(#e1)"/><path d="M8.500 8.500C4 11 5 21 13.500 23.900c4-.4 7-2.500 8.500-5.400-5.500 3-12 1-13-4-.3-2 .5-4 2.500-5z" fill="#125ca8"/><path d="M13.500 13.800c-1.300 1.400.5 2.700 3.500 2.700 2.800 0 5-1 6.500-3.300.3 1.500-.2 3.500-1.500 5.300-5 2.500-10.500.3-10.500-4.500 0-1.500.5-2.700 1.500-3.500 1.300 1 1.500 2.200.5 3.300z" fill="#4f626b"/>`),'on')],
  [496,38,S(38,28,`<path d="M1 8 12.500 1 24 8v15H1z" fill="#0f5fa8"/><path d="M4 8h17v8H4z" fill="#e8f2fa"/><path d="m1 8 11.500 8L24 8v15H1z" fill="#2a9be8"/><path d="M1 23 12.500 14 24 23z" fill="#1581d3"/><rect x="9.500" y="11.500" width="27" height="16" rx="8" fill="#37424a" stroke="#9da7ad"/><text x="23" y="23.500" font-size="11.500" font-weight="600" fill="#fff" text-anchor="middle">99+</text>`)],
  [546,24,ic.chrome],
  [587,40,run(S(26,26,`<circle cx="13" cy="4.500" r="3.700" fill="#7b83eb"/><circle cx="21" cy="5.500" r="2.700" fill="#5059c9"/><path d="M8 9h11v9a6 6 0 0 1-11 2z" fill="#7b83eb"/><path d="M18 9h6.500v7a4.500 4.500 0 0 1-6.500 3z" fill="#5059c9"/><rect x="1" y="6.500" width="12.500" height="12.500" rx="1" fill="#4b53bc"/><path d="M4 10h6.500M7.250 10v6.500" stroke="#fff" stroke-width="1.700"/><path d="m20 14 5.500 10h-11z" fill="#fcd34a" stroke="#fcd34a" stroke-linejoin="round"/><path d="M20 17v4M20 22v1.500" stroke="#222" stroke-width="1.400"/>`))],
  [636,40,run(`<span style="margin-left:3px">${S(28,26,`<g transform="translate(0 1)">${ic.chrome.replace(/<\/?svg[^>]*>/g,'')}</g><circle cx="18.500" cy="18" r="7.700" fill="#c2185b"/><text x="18.500" y="22" font-size="11" fill="#fff" text-anchor="middle">L</text>`)}</span>`)],
  [685,40,run(`<span style="margin-right:4px">${S(20,24,`<path d="m7 1 12 1-3 19L0 19z" fill="#dfeff2"/><path d="m6 3 11.500 1L13 20.500 0 18z" fill="#6fb5bf"/><path d="m8 4 9 1-2.500 9z" fill="#a8dbe0"/><path d="m0 18.500 13 2 2 2-14-2.500z" fill="#9a9a94"/><path d="M19.500 3 16 22l-2.500-1.500L17.500 3z" fill="#c6c6c6"/>`)}</span>`)],
  [734,40,run(`<span style="margin-right:1px">${S(26,24,`<circle cx="14.500" cy="12" r="11.300" fill="#d9512c"/><path d="M14.500.7A11.300 11.300 0 0 1 25.800 12H14.500z" fill="#f58a6b"/><path d="M3.500 14.500h22a11.300 11.300 0 0 1-22 0z" fill="#c2401f"/><rect x="1" y="6" width="12" height="12" rx="1" fill="#b83a1b"/><text x="7" y="15.800" font-size="11" font-weight="700" fill="#fff" text-anchor="middle">P</text>`)}</span>`)],
  [783,40,run(S(24,24,`<path d="M17.500 0 24 3v18l-6.500 3L6 13.800 2.300 16.700 0 15.500l4-3.500-4-3.500 2.300-1.200L6 10.200z" fill="#1f8ad2"/><path d="M17.500 6.500v11L10.500 12z" fill="#20363f"/><path d="M17.500 0 24 3v18l-6.500 3z" fill="#2fa8f2"/>`))],
  [1441,27,S(27,28,`<defs><linearGradient id="w" x1="0" y1="0" x2="0" y2="1"><stop stop-color="#e3eeff"/><stop offset="1" stop-color="#8db4f5"/></linearGradient></defs><path d="M6 25a5 5 0 0 1-.5-10 7 7 0 0 1 13-2A6 6 0 0 1 20 25z" fill="url(#w)"/><circle cx="19" cy="8" r="6" fill="#c42b1c"/><text x="19" y="11.500" font-size="9.500" fill="#fff" text-anchor="middle">1</text>`)],
  [1474,30,`<span class="up">${T(30,'32°C')}</span>`],[1512,87,`<span class="up">${T(87,'Mostly cloudy')}</span>`],
  [1623,12,S(12,8,'<path d="m.7 7 5.300-5.500L11.300 7" stroke="#fff" stroke-width="1.300"/>')],
  [1647,13,S(13,17,'<rect x="1" y="4" width="8.500" height="9" rx="2" stroke="#fff" stroke-width="1.200"/><path d="m9.500 7.500 2.500-1.500v5L9.500 9.700M2 2q3.500-2 7 0M2 15.200q3.500 2 7 0" stroke="#fff" stroke-width="1.200"/>')],
  [1669,17,S(17,17,'<path d="M16 7V1L4 2.500V3M1 3v11h8M1 3h4M16 1v7" stroke="#fff" stroke-width="1.200"/><path d="M5 8a4 4 0 0 1 6.500-1.500M11.500 4v3h-3M11 10a4 4 0 0 1-6 1M4.800 13.500v-3h3" stroke="#fff"/><circle cx="12.500" cy="12.800" r="3.700" fill="#f79a12"/>')],
  [1694,15,S(15,10,'<path d="M.6.600h12.600v8.800H.600zM13.200 3h1.200v4h-1.200" stroke="#fff" stroke-width="1.200"/><rect x="2" y="2" width="4.500" height="6" fill="#fff"/>')],
  [1719,14,S(14,14,'<path d="M1 11.500C2 5.500 6.500 1.500 13 1.200M3.500 12.500C4.200 8 7.500 5 13 4.500M6.500 13c.5-3 3-5 6.500-5.200" stroke="#fff" stroke-width="1.100"/><circle cx="11.500" cy="12" r="1.700" fill="#fff"/>')],
  [1741,17,S(17,14,'<path d="M.7 4.800H3L6.500 1.500v11L3 9.200H.7z" stroke="#fff" stroke-width="1.200"/><path d="M9 5q1.300 2 0 4" stroke="#fff"/><path d="M11.300 3.200q2.600 3.800 0 7.600" stroke="#ccc"/><path d="M13.500 1.500q4 5.500 0 11" stroke="#76809a"/>')],
  [1767,23,`<span class="up" style="font-size:12px">${T(23,'ENG')}</span>`],
  [1801,62,`<span class="clock">${T(48,'05:42 PM')}${T(58,'11-04-2024')}</span>`],
  [1878,28,S(28,28,'<path d="M1 4h16v12H7l-3.500 3.500V16H1z" fill="#fff"/><path d="M4 7.500h10M4 10.500h10M4 13.300h5" stroke="#1a2744" stroke-width="1.100"/><rect x="6.500" y="12" width="20" height="15.500" rx="7.700" fill="#3c4250" stroke="#9da2ac"/><text x="16.500" y="23.800" font-size="11" font-weight="600" fill="#fff" text-anchor="middle">25</text>')],
  [1915,1,'<svg width="1" height="40"><rect width="1" height="40" fill="#76809a"/></svg>']
 ], 336);
});

/* ---------- whole screen ---------- */
define('desktop-screen', `:host{display:flex;flex-direction:column;width:1920px;height:1080px;background:#3b3b3b}
.body{display:flex;height:1008px}.left{width:1876px;display:flex;flex-direction:column}
.view{display:flex;margin-left:4px;height:932px;width:1872px;border-radius:8px;overflow:hidden}
tool-bar{height:38px}favorites-bar{height:34px;padding-bottom:3px}edge-rail{height:1008px;padding-bottom:0}`,
`<title-bar></title-bar><div class="body"><div class="left"><tool-bar></tool-bar><favorites-bar></favorites-bar><div class="view"><app-nav></app-nav><dash-board></dash-board><scroll-track></scroll-track></div></div><edge-rail></edge-rail></div><task-bar></task-bar>`);

/* refit every label once the whole tree is laid out */
(function walk(n) {
  n.querySelectorAll('*').forEach(e => { if (e.fit) e.fit(); if (e.shadowRoot) walk(e.shadowRoot); });
})(document);
</script>
</body>
</html>
